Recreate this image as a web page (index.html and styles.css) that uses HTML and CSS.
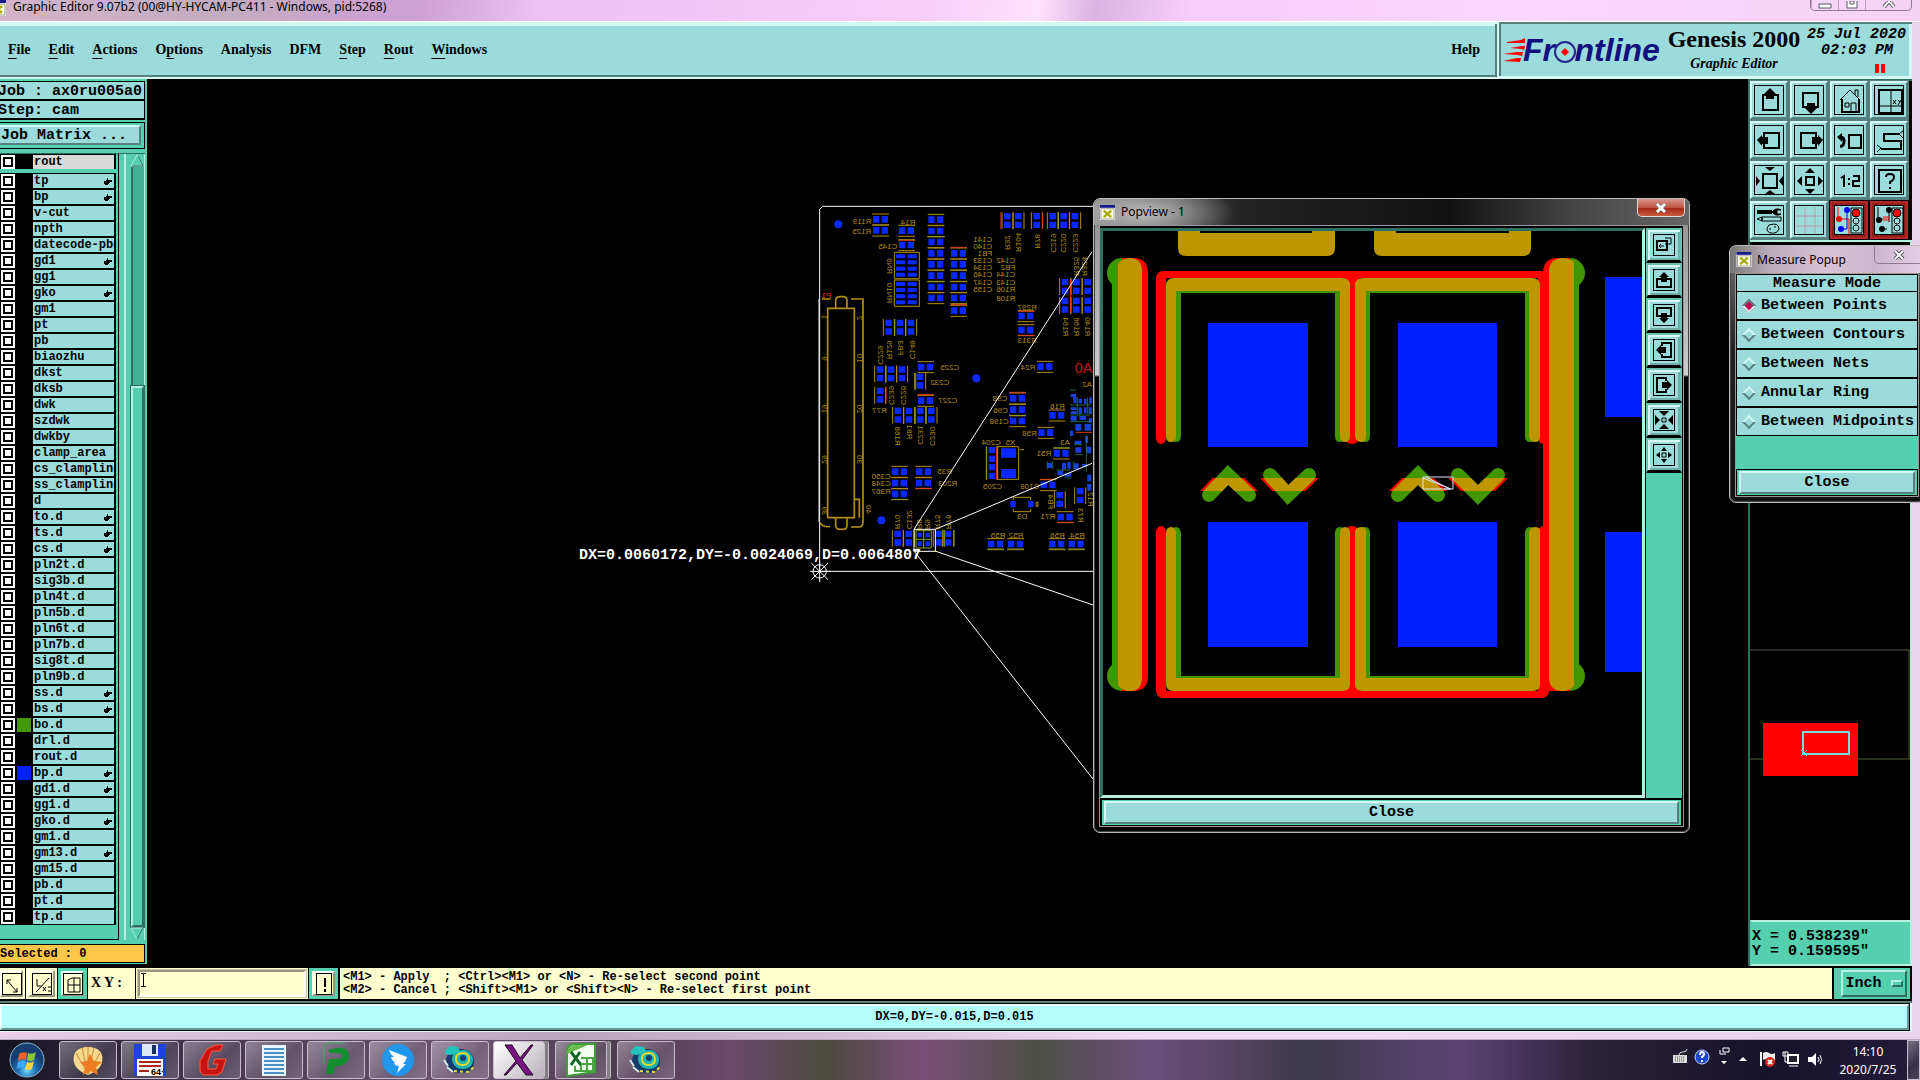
FILE: index.html
```html
<!DOCTYPE html>
<html lang="en">
<head>
<meta charset="utf-8">
<title>Graphic Editor</title>
<link rel="stylesheet" href="styles.css">
</head>
<body>
<svg class="defs" aria-hidden="true">
  <defs>
    <symbol id="hand" viewBox="0 0 8 8"><path d="M3 0h1v2h4v2H6v1H5v1H4v1H1V6H0V3h2V2h1z"/></symbol>
    <symbol id="xicon" viewBox="0 0 16 16"><path d="M0 0h16v16H0z" fill="#fff"/><path d="M0 0h16v3H0z" fill="#1a1a8c"/><path d="M1 4h14v11H1z" fill="#fffde8" stroke="#555" stroke-width=".6"/><path d="M4 6l8 7M12 6l-8 7" stroke="#a9a800" stroke-width="2.4"/></symbol>
    <g id="h"><path d="M0 0h50M0 33h50" stroke="#b48c14" stroke-width="3"/><path d="M2 6h19v20H2zM28 6h19v20H28z" fill="#0a28ff"/></g>
    <g id="v"><path d="M0 0v50M33 0v50" stroke="#b48c14" stroke-width="3"/><path d="M6 2h20v19H6zM6 28h20v19H6z" fill="#0a28ff"/></g>
    <g id="rn"><path d="M0 0h75v79H0z" fill="none" stroke="#b48c14" stroke-width="3"/><path d="M5 6h27v12H5zM40 6h27v12H40zM5 24h27v12H5zM40 24h27v12H40zM5 43h27v12H5zM40 43h27v12H40zM5 61h27v12H5zM40 61h27v12H40z" fill="#0a28ff"/></g>
    <g id="snail"><path d="M4 18c0-8 7-12 15-12s13 6 13 13-5 11-13 11S4 27 4 18z" fill="#163c6b"/><path d="M10 16c0-6 5-9 11-9s10 5 10 10-4 9-10 9-11-4-11-10z" fill="#1fb5b0"/><path d="M14 16c0-4 3-6 7-6s6 3 6 6-2 6-6 6-7-2-7-6z" fill="none" stroke="#e8d92e" stroke-width="2"/><circle cx="21" cy="15" r="3" fill="#14406e"/><path d="M3 8l5-5 8 1 2 5-9 3-6-1z" fill="#23c4bb"/><path d="M12 28l14 1 6-5" fill="none" stroke="#e8d92e" stroke-width="2" stroke-dasharray="3 3"/><path d="M2 17l4 6M5 24l6 5" stroke="#d8e6e6" stroke-width="2"/></g>
  </defs>
</svg>

<div class="app">
  <header class="titlebar">
    <svg class="title-icon" width="16" height="16"><use href="#xicon"/></svg>
    <span class="title">Graphic Editor 9.07b2 (00@HY-HYCAM-PC411 - Windows, pid:5268)</span>
    <span class="win-controls">
      <button aria-label="Minimize"><svg width="14" height="8"><path d="M1 3h12v4H1z" fill="#fff" stroke="#556"/></svg></button>
      <button aria-label="Restore"><svg width="14" height="8"><path d="M2-4h10v11H2zM5 0h4v3H5z" fill="#fff" stroke="#556"/></svg></button>
      <button class="wide" aria-label="Close window"><svg width="14" height="8"><path d="M1-7l11 13M13-7L2 6" stroke="#556" stroke-width="4"/><path d="M1-7l11 13M13-7L2 6" stroke="#fff" stroke-width="2"/></svg></button>
    </span>
  </header>

  <div class="menurow">
    <nav class="menubar">
      <a href="#"><u>F</u>ile</a><a href="#"><u>E</u>dit</a><a href="#"><u>A</u>ctions</a><a href="#">O<u>p</u>tions</a><a href="#">Analysis</a><a href="#">DFM</a><a href="#"><u>S</u>tep</a><a href="#"><u>R</u>out</a><a href="#"><u>W</u>indows</a><a class="help" href="#">Help</a>
    </nav>
    <div class="brand">
      <svg class="logo" width="162" height="40">
        <g fill="#f00"><path d="M4 12l14-2 4-2v5H4z"/><path d="M7 18l12-2h3l-1 4-3-1z"/><path d="M0 24l14-2h6l-1 4-4-1z"/><path d="M0 31l14-3h4l-1 4z"/></g>
        <text class="logo-text" x="20" y="31">Frontline</text>
        <circle cx="62" cy="22" r="10" fill="#9bdbdb" stroke="#26268c" stroke-width="2"/>
        <path d="M62 18l4 4-4 4-4-4z" fill="#f00"/>
      </svg>
      <div class="product"><strong>Genesis 2000</strong><em>Graphic Editor</em></div>
      <div class="clock"><span>25 Jul 2020</span><span class="time">02:03 PM</span><i class="pause"></i></div>
    </div>
  </div>

  <main class="work">
    <aside class="side">
      <div class="field">Job : ax0ru005a0</div>
      <div class="field">Step: cam</div>
      <div class="matrix"><button>Job Matrix ...</button></div>
      <div class="listbox">
        <div class="layers">
          <label class="layer current"><input type="checkbox"><i></i><span>rout</span></label>
          <label class="layer"><input type="checkbox"><i></i><span>tp</span><svg><use href="#hand"/></svg></label>
          <label class="layer"><input type="checkbox"><i></i><span>bp</span><svg><use href="#hand"/></svg></label>
          <label class="layer"><input type="checkbox"><i></i><span>v-cut</span></label>
          <label class="layer"><input type="checkbox"><i></i><span>npth</span></label>
          <label class="layer"><input type="checkbox"><i></i><span>datecode-pbd</span></label>
          <label class="layer"><input type="checkbox"><i></i><span>gd1</span><svg><use href="#hand"/></svg></label>
          <label class="layer"><input type="checkbox"><i></i><span>gg1</span></label>
          <label class="layer"><input type="checkbox"><i></i><span>gko</span><svg><use href="#hand"/></svg></label>
          <label class="layer"><input type="checkbox"><i></i><span>gm1</span></label>
          <label class="layer"><input type="checkbox"><i></i><span>pt</span></label>
          <label class="layer"><input type="checkbox"><i></i><span>pb</span></label>
          <label class="layer"><input type="checkbox"><i></i><span>biaozhu</span></label>
          <label class="layer"><input type="checkbox"><i></i><span>dkst</span></label>
          <label class="layer"><input type="checkbox"><i></i><span>dksb</span></label>
          <label class="layer"><input type="checkbox"><i></i><span>dwk</span></label>
          <label class="layer"><input type="checkbox"><i></i><span>szdwk</span></label>
          <label class="layer"><input type="checkbox"><i></i><span>dwkby</span></label>
          <label class="layer"><input type="checkbox"><i></i><span>clamp_area</span></label>
          <label class="layer"><input type="checkbox"><i></i><span>cs_clampline</span></label>
          <label class="layer"><input type="checkbox"><i></i><span>ss_clampline</span></label>
          <label class="layer"><input type="checkbox"><i></i><span>d</span></label>
          <label class="layer"><input type="checkbox"><i></i><span>to.d</span><svg><use href="#hand"/></svg></label>
          <label class="layer"><input type="checkbox"><i></i><span>ts.d</span><svg><use href="#hand"/></svg></label>
          <label class="layer"><input type="checkbox"><i></i><span>cs.d</span><svg><use href="#hand"/></svg></label>
          <label class="layer"><input type="checkbox"><i></i><span>pln2t.d</span></label>
          <label class="layer"><input type="checkbox"><i></i><span>sig3b.d</span></label>
          <label class="layer"><input type="checkbox"><i></i><span>pln4t.d</span></label>
          <label class="layer"><input type="checkbox"><i></i><span>pln5b.d</span></label>
          <label class="layer"><input type="checkbox"><i></i><span>pln6t.d</span></label>
          <label class="layer"><input type="checkbox"><i></i><span>pln7b.d</span></label>
          <label class="layer"><input type="checkbox"><i></i><span>sig8t.d</span></label>
          <label class="layer"><input type="checkbox"><i></i><span>pln9b.d</span></label>
          <label class="layer"><input type="checkbox"><i></i><span>ss.d</span><svg><use href="#hand"/></svg></label>
          <label class="layer"><input type="checkbox"><i></i><span>bs.d</span><svg><use href="#hand"/></svg></label>
          <label class="layer"><input type="checkbox"><i class="green"></i><span>bo.d</span></label>
          <label class="layer"><input type="checkbox"><i></i><span>drl.d</span></label>
          <label class="layer"><input type="checkbox"><i></i><span>rout.d</span></label>
          <label class="layer"><input type="checkbox"><i class="blue"></i><span>bp.d</span><svg><use href="#hand"/></svg></label>
          <label class="layer"><input type="checkbox"><i></i><span>gd1.d</span><svg><use href="#hand"/></svg></label>
          <label class="layer"><input type="checkbox"><i></i><span>gg1.d</span></label>
          <label class="layer"><input type="checkbox"><i></i><span>gko.d</span><svg><use href="#hand"/></svg></label>
          <label class="layer"><input type="checkbox"><i></i><span>gm1.d</span></label>
          <label class="layer"><input type="checkbox"><i></i><span>gm13.d</span><svg><use href="#hand"/></svg></label>
          <label class="layer"><input type="checkbox"><i></i><span>gm15.d</span></label>
          <label class="layer"><input type="checkbox"><i></i><span>pb.d</span></label>
          <label class="layer"><input type="checkbox"><i></i><span>pt.d</span></label>
          <label class="layer"><input type="checkbox"><i></i><span>tp.d</span></label>
        </div>
        <div class="scroll">
          <svg width="13" height="13"><path d="M0 12L6 1l6 11z" fill="#55cfae" stroke="#aef0dc"/><path d="M1 12h11L7 2" fill="none" stroke="#2c6e5e"/></svg>
          <div class="trough"></div>
          <div class="thumb"></div>
          <svg width="13" height="13"><path d="M0 1h12L6 12z" fill="#55cfae" stroke="#aef0dc"/><path d="M12 1L6 12" stroke="#2c6e5e"/></svg>
        </div>
      </div>
      <div class="selected">Selected : 0</div>
    </aside>

    <svg class="board" aria-label="Board view">
      <g transform="translate(-147 -79)">
        <svg x="810" y="190" width="300" height="400" viewBox="0 0 900 1200">
          <g fill="#0a28ff"><circle cx="85" cy="103" r="12"/><circle cx="499" cy="565" r="12"/><circle cx="214" cy="991" r="12"/></g>
          <use href="#h" x="187" y="72"/><use href="#h" x="187" y="105"/><use href="#h" x="265" y="106"/><use href="#h" x="265" y="149"/>
          <use href="#h" x="353" y="73"/><use href="#h" x="353" y="107"/><use href="#h" x="353" y="140"/><use href="#h" x="353" y="174"/><use href="#h" x="353" y="207"/><use href="#h" x="353" y="241"/><use href="#h" x="353" y="275"/><use href="#h" x="353" y="308"/>
          <use href="#h" x="421" y="174"/><use href="#h" x="421" y="207"/><use href="#h" x="421" y="241"/><use href="#h" x="421" y="275"/><use href="#h" x="421" y="308"/><use href="#h" x="421" y="346"/>
          <use href="#rn" x="253" y="187"/><use href="#rn" x="253" y="270"/>
          <use href="#v" x="220" y="387"/><use href="#v" x="254" y="387"/><use href="#v" x="287" y="387"/>
          <use href="#v" x="194" y="527"/><use href="#v" x="227" y="527"/><use href="#v" x="260" y="527"/><use href="#v" x="194" y="591"/>
          <use href="#h" x="322" y="515"/><use href="#h" x="322" y="616"/><use href="#v" x="314" y="549"/>
          <use href="#v" x="248" y="651"/><use href="#v" x="281" y="651"/><use href="#v" x="315" y="651"/><use href="#v" x="348" y="651"/>
          <use href="#h" x="244" y="829"/><use href="#h" x="244" y="863"/><use href="#h" x="244" y="896"/><use href="#h" x="316" y="829"/><use href="#h" x="316" y="863"/>
          <use href="#v" x="247" y="1020"/><use href="#v" x="280" y="1020"/><use href="#v" x="370" y="1020"/><use href="#v" x="398" y="1020"/>
          <use href="#v" x="576" y="67"/><use href="#v" x="609" y="67"/><use href="#v" x="664" y="67"/><use href="#v" x="712" y="67"/><use href="#v" x="745" y="67"/><use href="#v" x="779" y="67"/>
          <use href="#v" x="749" y="265"/><use href="#v" x="783" y="265"/><use href="#v" x="817" y="265"/><use href="#v" x="749" y="321"/><use href="#v" x="783" y="321"/><use href="#v" x="817" y="321"/>
          <use href="#h" x="623" y="362"/><use href="#h" x="623" y="404"/><use href="#h" x="680" y="514"/>
          <use href="#h" x="598" y="609"/><use href="#h" x="598" y="643"/><use href="#h" x="598" y="677"/>
          <use href="#h" x="716" y="660"/><use href="#h" x="683" y="712"/><use href="#h" x="729" y="774"/><use href="#h" x="690" y="869"/>
          <use href="#v" x="733" y="904"/><use href="#v" x="794" y="892"/><use href="#h" x="741" y="965"/>
          <use href="#h" x="532" y="1046"/><use href="#h" x="592" y="1046"/><use href="#h" x="716" y="1046"/><use href="#h" x="774" y="1046"/>
          <use href="#v" x="530" y="769"/><use href="#v" x="530" y="820"/>
          <g fill="none" stroke="#b48c14" stroke-width="3"><path d="M562 770h64v98h-64zM630 779h12M610 930v-8h52v8M610 957v8h52v-8M678 937h6v12h-6z"/></g>
          <path d="M573 775h45v28h-45zM573 837h45v28h-45zM601 933h16v19h-16zM655 933h16v19h-16z" fill="#0a28ff"/>
          <g fill="none" stroke="#b48c14" stroke-width="5"><path d="M123 327h36v668q0 16-14 16h-22M77 354v-22q0-12 14-12h8q12 0 12 12v22M53 355h80v628H53zM77 984v20q0 14 14 14h8q12 0 12-14v-20M134 928h14v55M36 327h26M60 1010q-22 2-30-12"/></g>
          <path d="M26 327v668" stroke="#777" stroke-width="4"/>
          <g fill="none" stroke="#e04010" stroke-width="3"><path d="M265 151h50M421 172h50M421 344h50M624 364h50M624 436h50M573 67v50M698 67v50M782 265v108M228 591v50M322 614h50M598 607h50M690 868h40M766 905v50M741 997h50M316 895h50M560 770v98M797 727h48"/></g>
          <g fill="none" stroke="#7fa01e" stroke-width="3"><path d="M254 387v50M287 387v50M228 527v50M315 651v50M348 651v50M352 140h52M352 275h52M598 677h50M529 770v98M744 67v50M532 1077h50M592 1077h50M717 1077h50M774 1077h50M402 1020v50M432 1020v50M245 928h50M730 774h48M317 549v50"/></g>
          <g fill="#1840d8"><path d="M782 612h16v10h-16zM790 622h10v18h-10zM806 626h10v14h-10zM822 626h8v16h-8zM838 622h8v20h-8zM782 652h18v8h-18zM782 664h18v8h-18zM806 652h10v20h-10zM822 652h8v18h-8zM836 652h10v20h-10zM782 678h18v14h-18zM808 678h20v12h-20zM836 684h10v14h-10zM796 702h18v20h-18zM824 702h20v20h-20zM780 722h10v16h-10zM826 738h8v20h-8zM794 752h20v10h-20zM796 772h18v16h-18zM830 770h14v20h-14zM712 818h14v16h-14zM756 818h12v20h-12zM772 816h10v20h-10zM792 820h14v18h-14zM816 822h16v10h-16zM742 842h18v14h-18zM764 848h20v12h-20zM832 854h12v20h-12zM832 882h12v20h-12z"/></g>
          <path d="M780 600h20M780 645h60M780 675h60M780 695h60M802 622v50M833 622v50M712 814v24M728 814v24M740 840h20M764 864h20M790 814v24M829 734v110M792 764h24M794 794h24M756 840h28" stroke="#2f9a6a" stroke-width="2"/>
          <g class="silk" transform="scale(-1 1)">
            <text x="-184" y="101">R119</text><text x="-184" y="132">R125</text><text x="-316" y="104">R14</text><text x="-262" y="176">C145</text>
            <text x="-547" y="155">C141</text><text x="-547" y="176">C140</text><text x="-547" y="198">FB1</text><text x="-547" y="220">C133</text><text x="-547" y="240">C134</text><text x="-547" y="262">C146</text><text x="-547" y="284">C147</text><text x="-547" y="305">C155</text>
            <text x="-616" y="220">C142</text><text x="-616" y="240">FB2</text><text x="-616" y="262">C144</text><text x="-616" y="284">C143</text><text x="-616" y="305">R106</text><text x="-616" y="332">R108</text>
            <text x="-680" y="360">R297</text><text x="-680" y="458">R313</text><text x="-676" y="539">R24</text><text x="-448" y="541">C225</text><text x="-418" y="586">C232</text><text x="-442" y="640">C227</text>
            <text x="-592" y="634">C98</text><text x="-594" y="669">C96</text><text x="-596" y="703">C198</text><text x="-764" y="657">R16</text><text x="-680" y="738">R58</text><text x="-780" y="764">A3</text><text x="-724" y="797">R51</text>
            <text x="-572" y="764">C204</text><text x="-616" y="764">X5</text><text x="-576" y="896">C205</text><text x="-688" y="897">C108</text><text x="-652" y="987">D3</text><text x="-736" y="988">R71</text>
            <text x="-242" y="868">C350</text><text x="-242" y="889">C348</text><text x="-242" y="911">R367</text><text x="-426" y="853">R35</text><text x="-442" y="889">R203</text><text x="-230" y="668">R77</text>
            <text x="-586" y="1044">R55</text><text x="-640" y="1044">R52</text><text x="-764" y="1044">R56</text><text x="-824" y="1044">R54</text><text x="-846" y="590">A2</text>
            <g>
              <text transform="translate(-232 252) rotate(-90)">RN9</text><text transform="translate(-232 340) rotate(-90)">RN10</text>
              <text transform="translate(-204 524) rotate(-90)">C229</text><text transform="translate(-232 508) rotate(-90)">R129</text><text transform="translate(-265 496) rotate(-90)">FB3</text><text transform="translate(-299 508) rotate(-90)">C149</text>
              <text transform="translate(-238 645) rotate(-90)">C239</text><text transform="translate(-272 645) rotate(-90)">C226</text>
              <text transform="translate(-254 767) rotate(-90)">R168</text><text transform="translate(-290 748) rotate(-90)">R81</text><text transform="translate(-324 764) rotate(-90)">C231</text><text transform="translate(-360 768) rotate(-90)">C230</text>
              <text transform="translate(-256 1018) rotate(-90)">R70</text><text transform="translate(-290 1018) rotate(-90)">C132</text><text transform="translate(-322 1018) rotate(-90)">R8</text><text transform="translate(-345 1018) rotate(-90)">R9</text><text transform="translate(-376 1018) rotate(-90)">R75</text><text transform="translate(-409 1018) rotate(-90)">R76</text>
              <text transform="translate(-585 180) rotate(-90)">R32</text><text transform="translate(-619 186) rotate(-90)">R104</text><text transform="translate(-674 176) rotate(-90)">R78</text><text transform="translate(-722 188) rotate(-90)">C219</text><text transform="translate(-754 188) rotate(-90)">C220</text><text transform="translate(-790 188) rotate(-90)">C223</text>
              <text transform="translate(-758 439) rotate(-90)">R164</text><text transform="translate(-792 439) rotate(-90)">R166</text><text transform="translate(-826 439) rotate(-90)">R140</text><text transform="translate(-792 258) rotate(-90)">R325</text><text transform="translate(-816 258) rotate(-90)">R324</text>
              <text transform="translate(-714 958) rotate(-90)">FB4</text><text transform="translate(-804 998) rotate(-90)">R73</text><text transform="translate(-834 950) rotate(-90)">R12</text>
              <text transform="translate(-140 391) rotate(-90)">2</text><text transform="translate(-140 518) rotate(-90)">10</text><text transform="translate(-140 670) rotate(-90)">20</text><text transform="translate(-140 822) rotate(-90)">30</text><text transform="translate(-168 972) rotate(-90)">40</text>
              <text transform="translate(-36 388) rotate(-90)">1</text><text transform="translate(-36 512) rotate(-90)">9</text><text transform="translate(-36 670) rotate(-90)">19</text><text transform="translate(-36 822) rotate(-90)">29</text><text transform="translate(-36 976) rotate(-90)">39</text>
            </g>
            <text x="-64" y="325" class="red">P1</text>
            <text x="-872" y="550" class="big">5A0</text>
          </g>
          <g fill="none" stroke="#fff" stroke-width="3"><path d="M29 1144V58l9-9h862M29 1144h871M312 1018h64v66h-64z"/><path d="M846 185L312 1018M846 820L376 1018"/><circle cx="29" cy="1144" r="20"/><path d="M-3 1144h64M29 1112v64M4 1119l50 50M54 1119l-50 50"/></g>
          <path d="M318 1022h46v52h-46zM341 1022v52M318 1048h46" fill="none" stroke="#7fa01e" stroke-width="3"/>
          <path d="M322 1028h14v14h-14zM346 1028h14v14h-14zM322 1054h14v14h-14zM346 1054h14v14h-14z" fill="#0a28ff"/>
        </svg>
        <path d="M935 551L1093 605M914 551L1093 779" stroke="#fff" fill="none"/>
        <text class="measure" x="579" y="559">DX=0.0060172,DY=-0.0024069,D=0.0064807</text>
      </g>
    </svg>

    <aside class="right">
      <div class="tools">
        <button aria-label="Pan up"><svg><path d="M8 9h15v15H8z" class="thick"/><path d="M15 2l6 6h-2v5h-8V8H9z"/></svg></button>
        <button aria-label="Pan down"><svg><path d="M8 7h15v14H8z" class="thick"/><path d="M12 17h8v5h2l-6 6-6-6h2z"/></svg></button>
        <button aria-label="Home"><svg><path d="M5 14L15 4l10 10M16 26v-9h5v9M10 17h4v4h-4zM20 9V4h3v7" class="thin"/><path d="M7 13v13h17V13" class="thick"/></svg></button>
        <button aria-label="Pan XY"><svg><path d="M4 4h23v23H4z" class="thick"/><path d="M16 4v23M4 20h23" class="thin"/><path d="M18 14l3 4M21 14l-3 4M23 14l2 2 1-2M25 16l-2 3" class="thin"/></svg></button>
        <button aria-label="Pan left"><svg><path d="M9 7h15v15H9z" class="thick"/><path d="M2 14l5-5v2h6v7H7v2z"/></svg></button>
        <button aria-label="Pan right"><svg><path d="M6 7h15v15H6z" class="thick"/><path d="M28 14l-5-5v2h-6v7h6v2z"/></svg></button>
        <button aria-label="Previous view"><svg><path d="M14 9h12v13H14z" class="thick"/><path d="M2 11l5-4v3c5 0 5 12-2 12v-3c3 0 3-5 2-5v2z"/></svg></button>
        <button aria-label="Serpentine zoom"><svg><path d="M24 8H9v7h17v8H6" class="thick"/><path d="M24 8l4-3M24 8l4 4M6 22l-4-3M6 22l-4 4" class="thin"/></svg></button>
        <button aria-label="Zoom in"><svg><path d="M8 8h14v14H8z" class="thick"/><path d="M10 1h10l-5 4zM10 28h10l-5-4zM1 10v10l4-5zM28 10v10l-4-5z"/></svg></button>
        <button aria-label="Zoom out"><svg><path d="M11 11h8v8h-8z" class="thick"/><path d="M10 7h10l-5-5zM10 23h10l-5 5zM7 10v10l-5-5zM23 10v10l5-5z"/></svg></button>
        <button aria-label="Zoom 1:2"><svg><path d="M6 12l3-2v11M14 12v2M14 17v2M18 10h6v5h-6v5h7" class="thick"/></svg></button>
        <button aria-label="Query"><svg><path d="M4 4h22v22H4z" class="thick"/><path d="M11 11q0-3 4-3t4 3-4 5v2M15 21v2" class="thick"/></svg></button>
        <button aria-label="Options"><svg><path d="M2 4h15v4H2z"/><path d="M17 6q4-5 9-2h-4v4h4q-5 3-9-2z" stroke="#000"/><path d="M2 13l5-2v4zM7 11h19v4H7z" class="thin"/><path d="M14 19q10-3 10 4-2 5-8 4-7-2-2-8zM14 23h2M19 21h2" class="thin"/></svg></button>
        <button aria-label="Grid"><svg><path d="M10 1v28M20 1v28M1 10h28M1 20h28" stroke="#b89aa6" fill="none"/></svg></button>
        <button class="alert" aria-label="Net rules"><svg><path d="M3 1v12h11v16" stroke="#f00" fill="none"/><path d="M12 4v19H7" stroke="#00f" fill="none"/><circle cx="4" cy="13" r="3" fill="#f00"/><circle cx="12" cy="4" r="3" fill="#00f"/><circle cx="6" cy="23" r="3" fill="#00f"/><path d="M16 2h11v25H16z" class="thin"/><circle cx="21" cy="7" r="4" fill="#f00" stroke="#000"/><circle cx="21" cy="15" r="3" class="thin"/><circle cx="21" cy="22" r="3" class="thin"/></svg></button>
        <button class="alert" aria-label="Spacing rules"><svg><path d="M3 1v12h5M14 4v12M12 23H8" stroke="#000" fill="none"/><path d="M9 10v5M11 10v5M13 10v5" stroke="#f00"/><circle cx="4" cy="14" r="3"/><circle cx="14" cy="4" r="3"/><circle cx="7" cy="23" r="3"/><path d="M17 2h11v25H17z" class="thin"/><circle cx="22" cy="7" r="4" fill="#f00" stroke="#000"/><circle cx="22" cy="15" r="3" class="thin"/><circle cx="22" cy="22" r="3" class="thin"/></svg></button>
      </div>
      <svg class="overview" aria-label="Overview">
        <path d="M0 408h160M0 517h160M159 408v109" stroke="#4d5f2f" fill="none"/>
        <path d="M13 481h95v53H13z" fill="#f00"/>
        <path d="M53 490h46v22H53z" fill="none" stroke="#6ee0e0" stroke-width="2"/>
        <path d="M51 508l6 6M57 508l-6 6" stroke="#6ee0e0"/>
      </svg>
      <div class="coords"><span>X = 0.538239"</span><span>Y = 0.159595"</span></div>
    </aside>
  </main>

  <div class="cmd">
    <div class="cell"><button aria-label="Measure"><svg width="20" height="22"><path d="M4 6l10 12M4 10V6h4M14 14v4h-4" class="thin"/></svg></button></div>
    <div class="cell wide"><button aria-label="Angle snap"><svg width="20" height="22"><path d="M3 18L16 4M4 5v7h4M10 17l3-4M10 13l3 4M15 13h3M15 17h3" class="thin"/></svg></button></div>
    <div class="cell teal"><button aria-label="Grid snap"><svg width="20" height="22"><path d="M4 6l4-2h8v14H4zM4 11h12M10 4v14" class="thin"/></svg></button></div>
    <label class="xy" for="xy">X Y :</label>
    <div class="entry"><input id="xy" type="text"><span class="ibeam"></span></div>
    <div class="cell teal wide"><button aria-label="Warnings"><svg width="16" height="22"><path d="M8 4v9M8 15v3" class="thick"/></svg></button></div>
    <div class="hint"><span>&lt;M1&gt; - Apply&nbsp; ; &lt;Ctrl&gt;&lt;M1&gt; or &lt;N&gt; - Re-select second point</span><span>&lt;M2&gt; - Cancel ; &lt;Shift&gt;&lt;M1&gt; or &lt;Shift&gt;&lt;N&gt; - Re-select first point</span></div>
    <div class="unit"><button>Inch<i></i></button></div>
  </div>
  <div class="status"><span>DX=0,DY=-0.015,D=0.015</span></div>
</div>

<section class="win popview">
  <header><svg width="15" height="15"><use href="#xicon"/></svg><span>Popview - 1</span><button class="redclose" aria-label="Close popview"><svg width="12" height="10"><path d="M2 1l8 8M10 1L2 9" stroke="#555" stroke-width="4"/><path d="M2 1l8 8M10 1L2 9" stroke="#fff" stroke-width="3"/></svg></button></header>
  <div class="win-body">
    <div class="pv-row">
      <svg class="pv-canvas" aria-label="Zoomed view">
        <g transform="translate(-1103 -231)">
          <g fill="#be9700"><path d="M1178 231h22v2h112v-2h23v17q0 8-8 8h-141q-8 0-8-8zM1374 231h22v2h113v-2h22v17q0 8-8 8h-141q-8 0-8-8z"/></g>
          <path d="M1112 272v405h31V272zM1549 272v405h30V272z" fill="#429600"/>
          <g fill="#429600"><circle cx="1122" cy="273" r="15"/><circle cx="1122" cy="676" r="15"/><circle cx="1570" cy="273" r="15"/><circle cx="1570" cy="676" r="15"/></g>
          <path d="M1122 258h11q15 0 15 15v403q0 15-15 15h-11zM1570 258h-12q-15 0-15 15v418h27z" fill="#f00"/>
          <path d="M1118 264q4-6 12-6 12 0 12 14v405q0 14-12 14-8 0-12-6zM1549 272q0-14 14-14 6 0 11 4v424q-5 5-11 5-14 0-14-14z" fill="#be9700"/>
          <path d="M1156 279q0-8 8-8h380v7h-378v158q0 8-5 8t-5-8zM1156 534q0-8 5-8t5 8v157h378V527h5v163q0 8-8 8h-377q-8 0-8-8zM1345 274h14v162q0 8-7 8t-7-8zM1345 534q0-8 7-8t7 8v160h-14zM1538 274h6v170q-6 0-6-8zM1538 534q0-8 6-8v168h-6z" fill="#f00"/>
          <path d="M1172 284h173v152q0 6-5 6t-5-6V293h-154v143q0 6-5 6t-4-6zM1360 284h175v152q0 6-5 6t-5-6V293h-155v143q0 6-5 6t-5-6zM1172 533q0-6 4-6t5 6v143h154V533q0-6 5-6t5 6v150h-173zM1360 533q0-6 5-6t5 6v143h155V533q0-6 5-6t5 6v150h-175z" fill="#429600"/>
          <path d="M1166 286q0-8 8-8h168q8 0 8 8v150q0 6-5 6t-5-6V291h-164v145q0 6-5 6t-5-6zM1355 286q0-8 8-8h169q8 0 8 8v150q0 6-5 6t-6-6V291h-163v145q0 6-5 6t-6-6zM1166 533q0-6 5-6t5 6v145h164V533q0-6 5-6t5 6v151q0 7-7 7h-170q-7 0-7-7zM1355 533q0-6 6-6t5 6v145h163V533q0-6 6-6t5 6v151q0 7-7 7h-171q-7 0-7-7z" fill="#be9700"/>
          <path d="M1208 323h100v124h-100zM1398 323h99v124h-99zM1208 522h100v125h-100zM1398 522h99v125h-99zM1605 277h37v140h-37zM1605 532h37v140h-37z" fill="#0020ff"/>
          <clipPath id="mid"><path d="M1190 478h330v13h-330z"/></clipPath>
          <g fill="none" stroke-linecap="round" stroke-width="14">
            <path d="M1209 495l19-20 21 20M1270 475l18 20 21-20M1398 495l20-20 20 20M1458 475l20 20 20-20" stroke="#429600"/>
            <g clip-path="url(#mid)"><path d="M1206 495l22-23 24 23M1267 475l21 23 24-23M1395 495l23-23 23 23M1455 475l23 23 23-23" stroke="#f00"/><path d="M1209 495l19-20 21 20M1270 475l18 20 21-20M1398 495l20-20 20 20M1458 475l20 20 20-20" stroke="#be9700"/></g>
          </g>
          <path d="M1423 477h30v12h-30zM1423 478l28 11M1426 477l24 12h-6" fill="none" stroke="#dfe2ff"/>
        </g>
      </svg>
      <div class="pv-tools">
        <button aria-label="Dock"><svg><path d="M3 6h10v9H3z" class="thick"/><path d="M11 3h6v6h-6M5 11h5M7 9l-2 2 2 2" class="thin"/></svg></button>
        <button aria-label="Up"><svg><path d="M7 9H3v8h14V9h-4" class="thick"/><path d="M10 2l5 5h-2v5H7V7H5z"/></svg></button>
        <button aria-label="Down"><svg><path d="M7 11H3V3h14v8h-4" class="thick"/><path d="M10 18l5-5h-2V8H7v5H5z"/></svg></button>
        <button aria-label="Left"><svg><path d="M8 6V3h9v14H8v-3" class="thick"/><path d="M2 10l5-5v2h5v6H7v2z"/></svg></button>
        <button aria-label="Right"><svg><path d="M12 6V3H3v14h9v-3" class="thick"/><path d="M18 10l-5-5v2H8v6h5v2z"/></svg></button>
        <button aria-label="Zoom in view"><svg><path d="M8 8h4v4H8z" class="thin"/><path d="M5 1h10l-5 5zM5 19h10l-5-5zM1 5v10l5-5zM19 5v10l-5-5z"/></svg></button>
        <button aria-label="Zoom out view"><svg><path d="M8 8h4v4H8z" class="thin"/><path d="M7 6h6l-3-4zM7 14h6l-3 4zM6 7v6l-4-3zM14 7v6l4-3z"/></svg></button>
      </div>
    </div>
    <div class="closebar"><button>Close</button></div>
  </div>
</section>

<section class="win popup">
  <header><svg width="16" height="15"><use href="#xicon"/></svg><span>Measure Popup</span><button class="glassclose" aria-label="Close popup"><svg width="12" height="10"><path d="M2 1l8 8M10 1L2 9" stroke="#556" stroke-width="4"/><path d="M2 1l8 8M10 1L2 9" stroke="#fff" stroke-width="2"/></svg></button></header>
  <div class="win-body">
    <h2>Measure Mode</h2>
    <label><input type="radio" name="mode" checked>Between Points</label>
    <label><input type="radio" name="mode">Between Contours</label>
    <label><input type="radio" name="mode">Between Nets</label>
    <label><input type="radio" name="mode">Annular Ring</label>
    <label><input type="radio" name="mode">Between Midpoints</label>
    <div class="closebar"><button>Close</button></div>
  </div>
</section>

<footer class="taskbar">
  <button class="orb" aria-label="Start"><svg width="36" height="36"><defs><radialGradient id="o" cy=".8"><stop offset="0" stop-color="#6fe0ff"/><stop offset=".5" stop-color="#2174b8"/><stop offset="1" stop-color="#163f70"/></radialGradient></defs><circle cx="18" cy="18" r="17" fill="url(#o)" stroke="#8fb8d8"/><path d="M10 12q4-3 8-1l-1 7q-4-2-8 1z" fill="#f0622d"/><path d="M19 11q4 2 8-1l-2 8q-4 2-7 0z" fill="#8cc63f"/><path d="M9 20q4-3 8-1l-2 7q-3-2-7 1z" fill="#3fa9f5"/><path d="M18 20q4 2 7-1l-2 8q-3 2-7 0z" fill="#ffd23e"/></svg></button>
  <button aria-label="Shell"><svg><path d="M18 33C7 29 2 22 4 13c2-6 8-8 14-8s12 2 14 8c2 9-3 16-14 20z" fill="#f8d88c"/><path d="M18 32L6 11M18 32L12 6M18 32V5M18 32l6-26M18 32l12-21" stroke="#c98a35"/><path d="M20 12l4 7 8 1-6 5 2 8-8-4-7 4 2-8-5-5 7-1z" fill="#ee7b22"/></svg></button>
  <button aria-label="Total 64"><svg><path d="M2 2h32v32H2z" fill="#2044d8"/><path d="M10 2h16v12H10z" fill="#dfe6f5"/><path d="M20 3h4v9h-4z" fill="#20306a"/><path d="M5 17h26v17H5z" fill="#fff"/><path d="M7 20h22M7 24h22M7 29h10" stroke="#a22" stroke-width="2"/><text x="19" y="33" class="tiny">64·</text></svg></button>
  <button aria-label="G tool"><svg><path d="M29 3l-3 6h-8l-4 10v8h8l2-5h-5l2-5h11l-4 13-5 3H9l-3-4V19L13 7l9-4z" fill="#c91414" stroke="#ff5a3c"/></svg></button>
  <button aria-label="Notes"><svg><path d="M6 3h24v31H6z" fill="#e9f6ff"/><path d="M8 7h20M8 11h20M8 15h20M8 19h20M8 23h20M8 27h20M8 31h20" stroke="#4a8fc2" stroke-width="2"/></svg></button>
  <button aria-label="P tool"><svg><path d="M6 22V4l3-3h18" fill="none" stroke="#3fae5c"/><path d="M10 8q14-5 19 0 5 7-1 13-4 4-11 3l-2 8H8l3-15h9q4 0 4-3t-4-3h-8z" fill="#12902f"/></svg></button>
  <button aria-label="Bird"><svg><circle cx="18" cy="18" r="16" fill="#2196ea"/><path d="M9 8l18 7q-1 4-4 7h3l-9 9 2-7q-4 0-5-3h2q-4-2-5-6h3q-4-3-5-7z" fill="#fff"/></svg></button>
  <button aria-label="Genesis"><svg><use href="#snail" y="1"/></svg></button>
  <button class="active stack" aria-label="X server"><svg><path d="M4 3h7l8 13L30 3h2L21 18l11 15h-7l-9-12L5 33H3l12-14z" fill="#7b1282" stroke="#1c0520"/></svg></button>
  <button class="stack" aria-label="Spreadsheet"><svg><path d="M4 10q0-8 8-8h20v28l-28 4z" fill="#f3fff0" stroke="#3f9d3c" stroke-width="2"/><path d="M4 12q0-9 9-9h12z" fill="#68b94f"/><path d="M8 10l10 13M17 10L8 23" stroke="#14662a" stroke-width="3"/><path d="M18 16h12v13H12v-5M24 16v13M18 23v6M18 22h12" fill="none" stroke="#4aa544" stroke-width="2"/></svg></button>
  <button aria-label="Genesis 2"><svg><use href="#snail" y="1"/></svg></button>
  <div class="tray">
    <svg width="160" height="28">
      <path d="M2 9h14v8H2z" fill="#ddd"/><path d="M4 11h10M4 13h10M4 15h10" stroke="#555" stroke-dasharray="1 1"/><path d="M8 9q0-3 4-3t4-3" fill="none" stroke="#ddd"/>
      <circle cx="31" cy="11" r="7" fill="#1c48c8" stroke="#c8d8ff"/><path d="M29 9q0-3 2-3t2 2-2 3v1M31 14v2" fill="none" stroke="#fff" stroke-width="2"/>
      <path d="M52 2h6v4h-6zM49 4v4h6" fill="none" stroke="#fff"/><path d="M50 15h6l-3 3zM68 15h8l-4-4z" fill="#fff"/>
      <path d="M90 6v14" stroke="#fff" stroke-width="2"/><path d="M92 7q3-2 6 0t6 0v7q-3 2-6 0t-6 0z" fill="#eee"/><circle cx="99" cy="16" r="5" fill="#d8261c"/><path d="M97 14l4 4M101 14l-4 4" stroke="#fff" stroke-width="2"/>
      <path d="M117 9h10v8h-10z" fill="#223" stroke="#fff" stroke-width="2"/><path d="M118 20h9M114 6v10h3M112 6h5v4h-5z" stroke="#fff" fill="none"/>
      <path d="M137 11h4l4-4v13l-4-4h-4z" fill="#fff"/><path d="M147 11q2 3 0 5M149 9q3 5 0 9" fill="none" stroke="#fff"/>
    </svg>
    <div class="date"><span>14:10</span><span>2020/7/25</span></div>
    <button class="peek" aria-label="Show desktop"></button>
  </div>
</footer>
</body>
</html>
```
FILE: styles.css
```css
* { box-sizing: border-box; }
:root {
  --face: #9bdbdb;
  --hi: #d3f8f6;
  --lo: #55807f;
  --teal: #55cfae;
  --teal-hi: #b4f0de;
  --teal-lo: #2f6f60;
  --mono: "Liberation Mono", monospace;
  --serif: "Liberation Serif", serif;
  --ui: "Noto Sans", sans-serif;
}
html, body { height: 100%; }
body {
  margin: 0;
  min-height: 100vh;
  display: flex;
  flex-direction: column;
  position: relative;
  overflow: hidden;
  background: #000;
  color: #000;
  font-family: var(--mono);
}
button, input { font: inherit; color: inherit; margin: 0; padding: 0; border-radius: 0; }
button { display: flex; align-items: center; justify-content: center; border: 0; background: none; }
a { color: inherit; text-decoration: none; }
svg { display: block; flex: none; overflow: hidden; }
.defs { position: absolute; width: 0; height: 0; }
.thin { fill: none; stroke: #000; stroke-width: 1; }
.thick { fill: none; stroke: #000; stroke-width: 2; }

.app {
  flex: 1;
  min-height: 0;
  display: flex;
  flex-direction: column;
  padding: 0 8px 7px 0;
  background: linear-gradient(90deg, #e9cdea, #b9a7bd 30%, #f2dcf2 60%, #e8d3ea);
}

/* title bar */
.titlebar {
  flex: none;
  height: 22px;
  display: flex;
  align-items: flex-start;
  margin-right: -8px;
  background: linear-gradient(100deg, #d3b3c8 0, #c3acc0 12%, #cf9fd6 22%, #eec0f2 28%, #f6cff8 48%, #ffe2ff 54%, #d9b4e0 57%, #f6cffa 62%, #fbd6fd 80%, #f3d3f5);
  border-bottom: 1px solid #fff;
}
.title-icon { margin-left: -10px; }
.title { margin-left: 7px; font: 12px/14px var(--ui); white-space: nowrap; }
.win-controls { display: flex; margin: 0 8px 0 auto; border: 1px solid #8d7a93; border-top: 0; border-radius: 0 0 5px 5px; }
.win-controls button { width: 27px; height: 10px; border-left: 1px solid #b7a0bd; }
.win-controls .wide { width: 46px; }

/* menu and brand */
.menurow { flex: none; height: 57px; display: flex; border-top: 2px solid var(--lo); }
.menubar {
  flex: 1;
  display: flex;
  align-items: center;
  gap: 18px;
  padding: 0 15px 0 8px;
  background: var(--face);
  border: 2px solid var(--lo);
  border-width: 0 2px 2px 0;
  box-shadow: inset 0 2px var(--hi);
  font: bold 14px/18px var(--serif);
  margin-bottom: 2px;
  outline: 2px solid var(--hi);
  outline-offset: 0;
}
.menubar .help { margin-left: auto; }
.menubar u { text-decoration: underline; text-underline-offset: 4px; text-decoration-thickness: 1px; }
.brand {
  flex: none;
  width: 415px;
  display: flex;
  padding-left: 4px;
  background: var(--face);
  border: 2px solid var(--hi);
  border-width: 0 3px 3px 2px;
  box-shadow: inset 2px 0 var(--lo);
}
.logo { margin-top: 6px; }
.logo-text { font: italic bold 32px "Liberation Sans", sans-serif; fill: #10107e; }
.product { display: flex; flex-direction: column; align-items: center; width: 138px; font-family: var(--serif); white-space: nowrap; }
.product strong { font-size: 24px; line-height: 30px; }
.product em { font-size: 14px; line-height: 20px; font-weight: bold; }
.clock { display: flex; flex-direction: column; padding: 3px 0 0 4px; font: italic bold 15px/16px var(--mono); white-space: nowrap; }
.clock .time { padding-left: 14px; }
.pause { width: 10px; height: 9px; margin: 5px 0 0 68px; border: solid #f00; border-width: 0 4px; }

/* work area */
.work { flex: 1; min-height: 0; display: flex; background: #000; }
.side {
  flex: none;
  width: 147px;
  display: flex;
  flex-direction: column;
  padding: 2px 2px 1px 0;
  border-bottom: 2px solid #000;
  background: var(--teal);
  font: bold 15px/19px var(--mono);
}
.field { margin-bottom: -1px; border: 1px solid #000; border-left: 0; border-bottom-width: 2px; background: var(--face); height: 20px; white-space: nowrap; text-indent: -2px; overflow: hidden; }
.matrix { margin-top: 3px; padding: 2px 3px 3px 0; border: 1px solid #000; border-left: 0; height: 27px; }
.matrix button { width: 100%; height: 100%; justify-content: flex-start; padding-left: 1px; background: var(--face); border: 2px solid; border-color: var(--hi) var(--lo) var(--lo) var(--hi); border-left: 0; white-space: nowrap; }
.listbox { flex: 1; min-height: 0; margin-top: 4px; display: flex; border-top: 1px solid var(--teal-lo); }
.layers { width: 119px; overflow: hidden; border-right: 1px solid #000; border-bottom: 1px solid #000; margin-bottom: 4px; }
.layer { display: flex; align-items: center; width: 116px; height: 16px; padding: 0 2px 0 1px; background: #000; font: bold 12px/14px var(--mono); position: relative; }
.layer.current { height: 15px; margin-bottom: 4px; }
.layer.current span { background: #d9d9d9; }
.layer input { appearance: none; flex: none; width: 14px; height: 14px; background: #fff; border: 2px solid #fff; box-shadow: inset 0 0 0 2px #000; }
.layer i { flex: none; width: 14px; height: 14px; margin: 0 2px; }
.layer i.green { background: #429600; }
.layer i.blue { background: #0020ff; }
.layer span { flex: 1; height: 14px; padding-left: 1px; background: var(--face); overflow: hidden; white-space: nowrap; }
.layer svg { position: absolute; right: 4px; top: 5px; width: 8px; height: 8px; }
.scroll { flex: 1; margin-left: 5px; padding-left: 5px; display: flex; flex-direction: column; border-left: 2px solid var(--teal-hi); border-right: 1px solid var(--teal-hi); margin-bottom: 4px; }
.trough { flex: 22; background: #46ae93; border-left: 2px solid var(--teal-lo); }
.thumb { flex: 54; border: 2px solid; border-color: var(--teal-hi) var(--teal-lo) var(--teal-lo) var(--teal-hi); outline: 1px solid var(--teal-lo); }
.selected { flex: none; height: 19px; background: #ffc64c; border: 1px solid #000; border-left: 0; font: bold 12px/18px var(--mono); }

.board { flex: 1; min-width: 0; height: 100%; }
.silk { font: 24px "Liberation Sans", sans-serif; fill: #b48c14; }
.silk .red { fill: #e04010; }
.silk .big { font-size: 44px; fill: #c01818; }
.measure { font: bold 15px var(--mono); fill: #fff; }

.right { flex: none; width: 164px; display: flex; flex-direction: column; border: solid var(--teal-lo); border-width: 2px 0 0 2px; }
.tools { display: grid; grid-template-columns: repeat(4, 38px); gap: 2px; padding: 0 0 1px; border-bottom: 2px solid var(--teal-hi); background: #000; }
.tools button { height: 38px; background: var(--face); border: 2px solid; border-color: var(--hi) var(--lo) var(--lo) var(--hi); box-shadow: 0 0 0 1px var(--lo); }
.tools svg { width: 30px; height: 30px; border: 1px solid #000; }
.tools .alert { border-color: #b52828; box-shadow: inset 0 0 0 2px #8e2020; }
.overview { flex: 1; min-height: 0; width: 100%; border-right: 2px solid var(--teal-hi); }
.coords { flex: none; height: 46px; display: flex; flex-direction: column; padding: 7px 0 0; background: var(--teal); border: 2px solid; border-color: var(--teal-hi) var(--teal-hi) var(--teal-hi) var(--teal); font: bold 15px/15px var(--mono); }

/* command line */
.cmd { flex: none; height: 35px; display: flex; border: solid #000; border-width: 2px 0; background: #ffffcf; }
.cell { width: 26px; border-right: 1px solid #000; padding: 2px 2px 2px 0; }
.cell.wide { width: 32px; padding: 2px; }
.cell button { width: 100%; height: 100%; border: 2px solid; border-color: #fffff2 #96967c #96967c #fffff2; background: #ffffcf; }
.cell svg { border: 1px solid #000; }
.cell.teal { width: 30px; padding: 3px; background: var(--teal); }
.xy { width: 47px; font: bold 14px/30px var(--serif); padding-left: 3px; white-space: nowrap; }
.entry { width: 174px; padding: 2px; border: solid #000; border-width: 0 1px; position: relative; }
.entry input { width: 100%; height: 27px; background: #ffffcf; border: 2px solid; border-color: #96967c #fffff2 #fffff2 #96967c; outline: 1px solid #c9c9a4; }
.ibeam { position: absolute; left: 5px; top: 5px; width: 5px; height: 14px; border: solid #000; border-width: 1px 0; background: linear-gradient(#000, #000) center/1px 100% no-repeat; }
.hint { flex: 1; display: flex; flex-direction: column; padding: 3px 0 0 3px; border-left: 1px solid #000; font: bold 12px/13px var(--mono); white-space: nowrap; }
.unit { width: 80px; padding: 2px 3px 2px 7px; border: solid #000; border-width: 0 2px; background: var(--teal); }
.unit button { width: 100%; height: 100%; gap: 9px; border: 2px solid; border-color: var(--teal-hi) var(--teal-lo) var(--teal-lo) var(--teal-hi); font: bold 15px/17px var(--mono); }
.unit i { width: 12px; height: 7px; border: 2px solid; border-color: var(--teal-hi) var(--teal-lo) var(--teal-lo) var(--teal-hi); }
.status { flex: none; height: 31px; border: 2px solid var(--lo); border-width: 2px 0 0; box-shadow: inset 0 0 0 2px #d9ffff; background: #b3ffff; padding: 1px 3px 2px 0; }
.status span { display: block; height: 100%; border: 2px solid; border-color: #e4ffff #659a9a #659a9a #e4ffff; outline: 1px solid #000; font: bold 12px/22px var(--mono); text-align: center; }

/* floating windows */
.win { position: absolute; border: 1px solid #bbb; border-radius: 7px; box-shadow: inset 0 0 0 1px #444; padding: 0 5px 5px; display: flex; flex-direction: column; }
.win header { display: flex; align-items: center; font: 12px/18px var(--ui); white-space: nowrap; position: relative; }
.win-body { flex: 1; min-height: 0; display: flex; flex-direction: column; border: 1px solid #999; background: #000; }
.popview { left: 1093px; top: 198px; width: 597px; height: 635px; background: linear-gradient(#4d4d4d 0, #999 30px, #ccc 176px, #000 178px); }
.popview header { height: 26px; margin: 0 -5px; padding-left: 6px; border-radius: 6px 6px 0 0; background: radial-gradient(ellipse 90px 30px at 50px 14px, #bbb, #7770), linear-gradient(90deg, #888, #222 25%, #111 60%, #444 80%, #666); gap: 6px; }
.redclose { position: absolute; right: 4px; top: 0; width: 48px; height: 18px; border: 1px solid #ddd; border-top: 0; border-radius: 0 0 5px 5px; background: linear-gradient(#d8978c, #c05444 50%, #a52312 52%, #cc5b3e); }
.pv-row { flex: 1; min-height: 0; display: flex; padding: 2px 1px 0 0; }
.pv-canvas { flex: 1; min-width: 0; height: 100%; border: solid; border-width: 3px; border-color: var(--teal-lo) var(--teal-hi) var(--teal-hi) var(--teal-lo); }
.pv-tools { width: 36px; margin-left: 1px; background: var(--teal); }
.pv-tools button { width: 36px; height: 35px; background: var(--face); border: 2px solid #6cc0b0; border-bottom: 3px solid #000; box-shadow: inset 2px 2px var(--hi), inset -2px -2px #71adab; }
.pv-tools svg { width: 22px; height: 22px; border: 1px solid #000; }
.closebar { margin: 1px 1px 0; padding: 1px 2px; border: 1px solid #000; background: var(--teal); }
.closebar button { width: 100%; height: 23px; background: var(--face); border: 2px solid; border-color: var(--hi) var(--lo) var(--lo) var(--hi); font: bold 15px/17px var(--mono); }

.popup { left: 1729px; top: 245px; width: 196px; height: 258px; background: linear-gradient(#777, #222 40%, #111); }
.popup header { height: 27px; margin: 0 -5px; padding-left: 6px; gap: 5px; border-radius: 6px 0 0 0; background: linear-gradient(90deg, #777, #b9adb8 20%, #d9c2d6 50%, #cdb6cb 75%, #e6d0e6); }
.glassclose { position: absolute; right: 0; top: 0; width: 50px; height: 18px; border: 1px solid #8d7a93; border-top: 0; border-radius: 0 0 5px 5px; }
.popup .win-body { background: var(--teal); }
.popup h2 { flex: none; margin: 1px 1px 0; height: 16px; font: bold 15px/17px var(--mono); text-align: center; background: var(--face); outline: 1px solid #000; }
.popup label { flex: none; display: flex; align-items: center; height: 29px; gap: 5px; padding-left: 5px; border: solid #000; border-width: 1px; background: var(--face); font: bold 15px/17px var(--mono); white-space: nowrap; }
.popup input { appearance: none; flex: none; width: 10px; height: 10px; margin: 0 2px; rotate: 45deg; border: 2px solid; border-color: var(--hi) var(--lo) var(--lo) var(--hi); }
.popup input:checked { background: #c4004f; border-color: var(--lo) var(--hi) var(--hi) var(--lo); }
.popup .closebar { margin: auto 0 0; }

/* task bar */
.taskbar {
  flex: none;
  height: 41px;
  display: flex;
  align-items: center;
  gap: 4px;
  padding-left: 9px;
  border-top: 1px solid #b9a9c0;
  background: linear-gradient(90deg, #14121f 0, #3b3046 8%, #6a5570 24%, #4d3b50 32%, #6b4a6c 38%, #4a4a3e 43%, #7a4f78 48%, #4d5046 54%, #6b4f7b 60%, #3d3a4a 68%, #5a4475 76%, #2a2238 83%, #16122a 92%, #241c3a);
}
.taskbar button { width: 58px; height: 38px; border: 1px solid #c9bccf; border-radius: 3px; background: linear-gradient(135deg, #ffffff60, #ffffff18 60%, #ffffff30); }
.taskbar button svg { width: 36px; height: 36px; }
.taskbar .orb { width: 36px; border: 0; background: none; margin-right: 10px; }
.taskbar .active { background: linear-gradient(135deg, #fff, #ffffff90); }
.taskbar .stack { width: 52px; margin-right: 6px; box-shadow: 3px 0 #5559, 4px 0 #c9bccf; }
.tiny { font: bold 9px "Liberation Sans", sans-serif; }
.tray { margin-left: auto; display: flex; align-items: center; gap: 3px; height: 100%; color: #fff; }
.date { width: 68px; display: flex; flex-direction: column; align-items: center; font: 12px/18px var(--ui); padding-top: 2px; }
.taskbar .peek { width: 13px; height: 40px; border-radius: 0; margin-left: 2px; }
```
